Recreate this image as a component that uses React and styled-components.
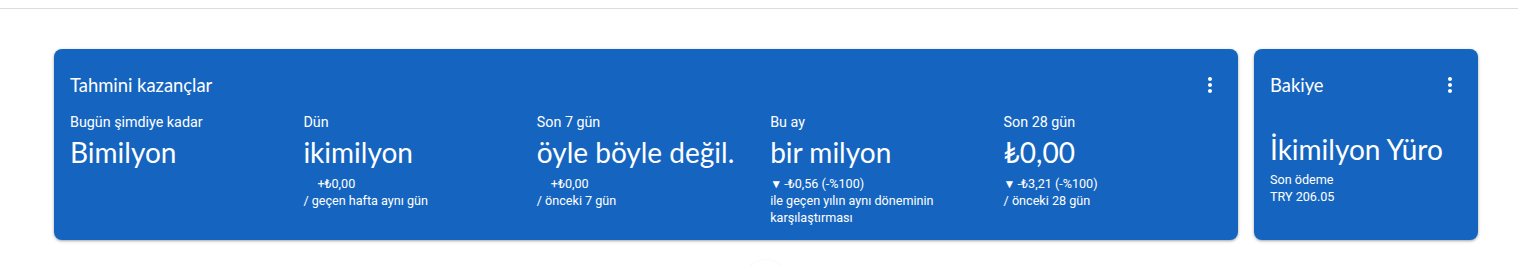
import styled, { createGlobalStyle } from "styled-components";
import { MdMoreVert } from "react-icons/md";

const GlobalStyle = createGlobalStyle`
  body {
    margin: 0;
    background: #ffffff;
    font-family: Roboto, "Liberation Sans", sans-serif;
  }
`;

// --- Styled Components ---

const TopBar = styled.header`
  height: 8px;
  border-bottom: 1px solid #dadce0;
`;

const Main = styled.main`
  padding: 40px 40px 0 54px;
  display: flex;
  flex-direction: column;
  align-items: center;
`;

const CardsRow = styled.div`
  display: flex;
  gap: 16px;
  width: 100%;
`;

const Card = styled.section`
  box-sizing: border-box;
  flex: ${(p) => (p.$grow ? "1" : "0 0 224px")};
  height: 191px;
  padding: 16px;
  border-radius: 8px;
  background: #1565c0;
  color: #ffffff;
  box-shadow: 0 1px 2px rgba(60, 64, 67, 0.3),
    0 1px 3px 1px rgba(60, 64, 67, 0.15);
`;

const CardHeader = styled.div`
  display: flex;
  align-items: center;
  justify-content: space-between;
  height: 40px;
`;

const CardTitle = styled.h2`
  margin: 0;
  font-family: Lato, "Open Sans", sans-serif;
  font-size: 18.4px;
  font-weight: 400;
`;

const MenuButton = styled.button`
  display: flex;
  align-items: center;
  justify-content: center;
  width: 24px;
  height: 24px;
  padding: 0;
  border: none;
  background: transparent;
  color: #ffffff;
  cursor: pointer;
`;

const StatsGrid = styled.div`
  display: grid;
  grid-template-columns: repeat(5, 1fr);
  margin-top: 7px;
  margin-right: -15px;
`;

const Stat = styled.div`
  display: flex;
  flex-direction: column;
`;

const Label = styled.div`
  font-size: 14.3px;
  line-height: 20px;
`;

const Value = styled.div`
  font-family: Lato, "Open Sans", sans-serif;
  font-size: 28px;
  line-height: 36px;
  margin-top: 2px;
  white-space: nowrap;
`;

const Delta = styled.div`
  display: flex;
  align-items: center;
  margin-top: 6px;
  font-size: 12.6px;
  line-height: 16px;
`;

const Arrow = styled.span`
  width: 14px;
  font-size: 12px;
  visibility: ${(p) => (p.$hidden ? "hidden" : "visible")};
`;

const Note = styled.div`
  font-size: 12.6px;
  line-height: 17px;
  max-width: 205px;
`;

const BalanceValue = styled(Value)`
  margin-top: 26px;
  margin-bottom: 4px;
`;

const FabShadow = styled.div`
  width: 44px;
  height: 44px;
  margin-top: 20px;
  border-radius: 50%;
  background: #ffffff;
  box-shadow: 0 1px 3px rgba(60, 64, 67, 0.15);
`;

const stats = [
  { label: "Bugün şimdiye kadar", value: "Bimilyon" },
  {
    label: "Dün",
    value: "ikimilyon",
    delta: "+₺0,00",
    down: false,
    note: "/ geçen hafta aynı gün",
  },
  {
    label: "Son 7 gün",
    value: "öyle böyle değil.",
    delta: "+₺0,00",
    down: false,
    note: "/ önceki 7 gün",
  },
  {
    label: "Bu ay",
    value: "bir milyon",
    delta: "-₺0,56 (-%100)",
    down: true,
    note: "ile geçen yılın aynı döneminin karşılaştırması",
  },
  {
    label: "Son 28 gün",
    value: "₺0,00",
    delta: "-₺3,21 (-%100)",
    down: true,
    note: "/ önceki 28 gün",
  },
];

const App = () => {
  return (
    <>
      <GlobalStyle />
      <TopBar />
      <Main>
        <CardsRow>
          <Card $grow>
            <CardHeader>
              <CardTitle>Tahmini kazançlar</CardTitle>
              <MenuButton aria-label="Diğer seçenekler">
                <MdMoreVert size={24} />
              </MenuButton>
            </CardHeader>
            <StatsGrid>
              {stats.map((s) => (
                <Stat key={s.label}>
                  <Label>{s.label}</Label>
                  <Value>{s.value}</Value>
                  {s.delta && (
                    <Delta>
                      <Arrow $hidden={!s.down}>▼</Arrow>
                      {s.delta}
                    </Delta>
                  )}
                  {s.note && <Note>{s.note}</Note>}
                </Stat>
              ))}
            </StatsGrid>
          </Card>
          <Card>
            <CardHeader>
              <CardTitle>Bakiye</CardTitle>
              <MenuButton aria-label="Diğer seçenekler">
                <MdMoreVert size={24} />
              </MenuButton>
            </CardHeader>
            <BalanceValue>İkimilyon Yüro</BalanceValue>
            <Note>Son ödeme</Note>
            <Note>TRY 206.05</Note>
          </Card>
        </CardsRow>
        <FabShadow />
      </Main>
    </>
  );
};

export default App;
